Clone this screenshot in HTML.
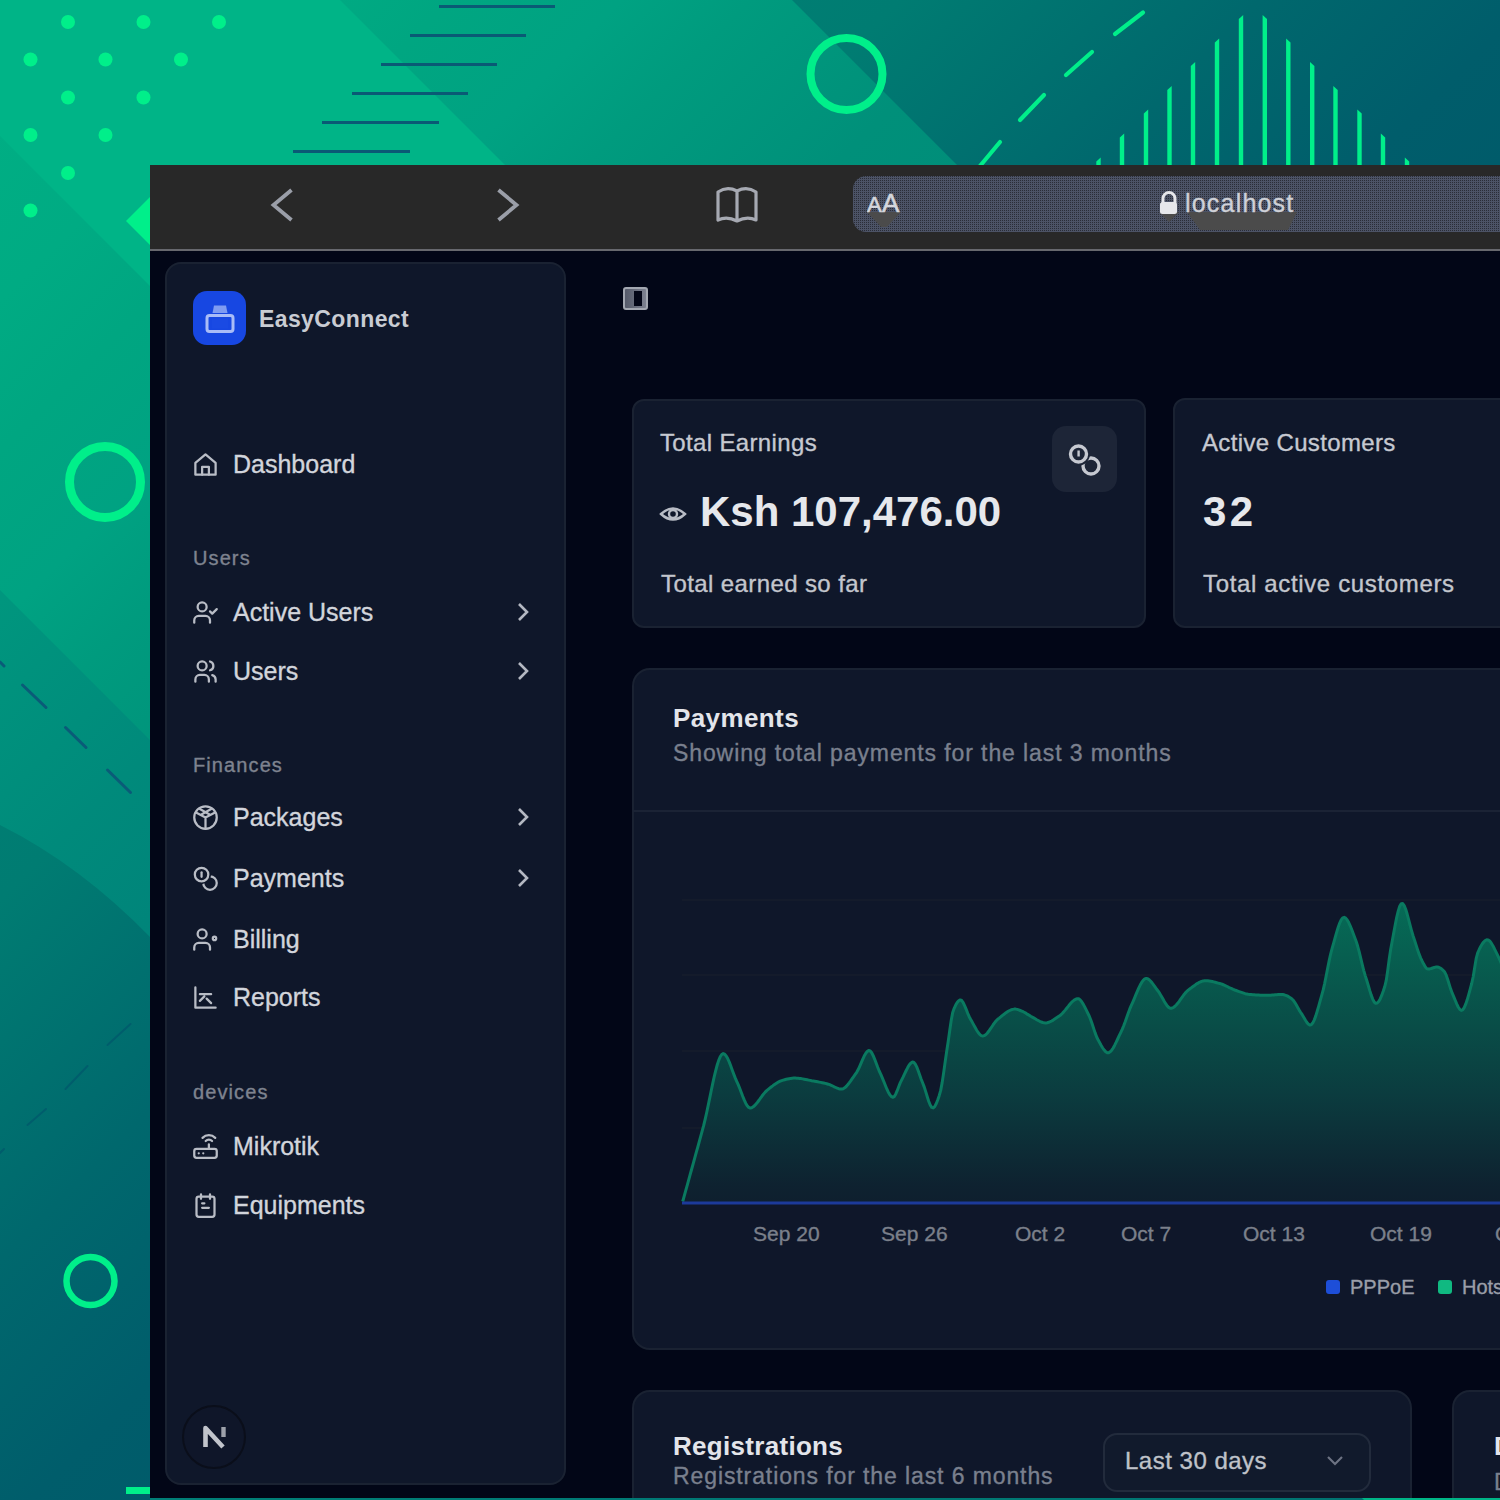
<!DOCTYPE html>
<html><head><meta charset="utf-8">
<style>
*{margin:0;padding:0;box-sizing:border-box}
html,body{width:1500px;height:1500px;overflow:hidden;font-family:"Liberation Sans",sans-serif}
body{position:relative;background:linear-gradient(135deg,#0fbb86 0%,#05a383 25%,#007a76 50%,#005d70 75%,#00526c 100%)}
.abs{position:absolute}
#bg{position:absolute;left:0;top:0;width:1500px;height:1500px}
#pg{position:absolute;left:-150px;top:-165px;width:1500px;height:1500px}
#win{position:absolute;left:150px;top:165px;width:1350px;height:1333px;background:#020617;overflow:hidden}
#tb{position:absolute;left:0;top:0;width:1350px;height:86px;background:#282828;border-bottom:2px solid #67686e}
#url{position:absolute;left:703px;top:11px;width:700px;height:56px;border-radius:13px;background-color:#4c5366;background-image:conic-gradient(#2a2d37 25%,transparent 0);background-size:2px 2px}
.t{position:absolute;white-space:nowrap;line-height:1;-webkit-text-stroke:0.35px currentColor}
.card{position:absolute;background:#0f172a;border:2px solid #1a2232;border-radius:12px}
.nav{color:#d4d7de;font-size:24px}
.sec{color:#8a8f9b;font-size:19px}
.ico{position:absolute}
</style></head><body>
<svg id="bg" width="1500" height="1500" viewBox="0 0 1500 1500">
  <defs>
    <linearGradient id="gBC" gradientUnits="userSpaceOnUse" x1="0" y1="0" x2="1500" y2="1500">
      <stop offset="0" stop-color="#00b084"/>
      <stop offset="0.1" stop-color="#00ab83"/>
      <stop offset="0.15" stop-color="#00a681"/>
      <stop offset="0.207" stop-color="#00a282"/>
      <stop offset="0.25" stop-color="#009b7e"/>
      <stop offset="0.333" stop-color="#00907a"/>
      <stop offset="1" stop-color="#007070"/>
    </linearGradient>
    <linearGradient id="gD" gradientUnits="userSpaceOnUse" x1="0" y1="0" x2="1500" y2="1500">
      <stop offset="0" stop-color="#009a7f"/>
      <stop offset="0.2" stop-color="#00967e"/>
      <stop offset="0.3" stop-color="#008a7b"/>
      <stop offset="0.367" stop-color="#00847a"/>
      <stop offset="1" stop-color="#007070"/>
    </linearGradient>
    <linearGradient id="g2" gradientUnits="userSpaceOnUse" x1="0" y1="0" x2="1500" y2="1500">
      <stop offset="0" stop-color="#008a78"/>
      <stop offset="0.3" stop-color="#007c72"/>
      <stop offset="0.42" stop-color="#00686d"/>
      <stop offset="0.51" stop-color="#005d6b"/>
      <stop offset="1" stop-color="#004a60"/>
    </linearGradient>
  </defs>
  <rect width="1500" height="1500" fill="url(#gBC)"/>
  <polygon points="0,0 340,0 2000,1660 2000,2136 0,136" fill="#00b487"/>
  <polygon points="0,590 1500,2090 0,2090" fill="url(#gD)"/>
  <polygon points="792,0 1500,0 1500,708" fill="url(#g2)"/>
  <path d="M0,825 Q80,865 150,937 L150,1500 L0,1500 Z" fill="url(#g2)"/>
  <!-- dots -->
  <g fill="#00ef8a">
    <circle cx="68" cy="22" r="7"/><circle cx="143.5" cy="22" r="7"/><circle cx="219" cy="22" r="7"/>
    <circle cx="30.5" cy="59.5" r="7"/><circle cx="105.5" cy="59.5" r="7"/><circle cx="181" cy="59.5" r="7"/>
    <circle cx="68" cy="97.5" r="7"/><circle cx="143.5" cy="97.5" r="7"/>
    <circle cx="30.5" cy="135" r="7"/><circle cx="105.5" cy="135" r="7"/>
    <circle cx="68" cy="173" r="7"/>
    <circle cx="30.5" cy="210.5" r="7"/>
  </g>
  <!-- horizontal lines -->
  <g stroke="#0a5a75" stroke-width="3">
    <line x1="439" y1="6.5" x2="555" y2="6.5"/>
    <line x1="410" y1="35.5" x2="526" y2="35.5"/>
    <line x1="381" y1="64.5" x2="497" y2="64.5"/>
    <line x1="352" y1="93.5" x2="468" y2="93.5"/>
    <line x1="322" y1="122.5" x2="439" y2="122.5"/>
    <line x1="293" y1="151.5" x2="410" y2="151.5"/>
  </g>
  <circle cx="846.5" cy="74" r="36" fill="none" stroke="#00ef8a" stroke-width="8"/>
  <circle cx="105" cy="482" r="35.5" fill="none" stroke="#00ef8a" stroke-width="9"/>
  <circle cx="90.5" cy="1281" r="24" fill="none" stroke="#00ef8a" stroke-width="6.5"/>
  <rect x="126" y="1487" width="24" height="7" fill="#00ef8a"/>
  <polygon points="126,221 150,197 174,221 150,245" fill="#00ef8a"/>
  <!-- dashed diagonal -->
  <g stroke="#00ef8a" stroke-width="4.2" stroke-linecap="round">
    <line x1="1115" y1="34" x2="1143" y2="12.5"/>
    <line x1="1066" y1="75" x2="1092" y2="52"/>
    <line x1="1020" y1="120" x2="1044" y2="95"/>
    <line x1="980" y1="166" x2="1000" y2="142"/>
  </g>
  <!-- vertical bars -->
  <g fill="#00ef8a"><polygon points="1096.3,161.5 1100.7,157.5 1100.7,170 1096.3,170"/><polygon points="1119.8,137.5 1124.2,133.5 1124.2,170 1119.8,170"/><polygon points="1143.8,113.5 1148.2,109.5 1148.2,170 1143.8,170"/><polygon points="1167.3,90.0 1171.7,86.0 1171.7,170 1167.3,170"/><polygon points="1190.8,66.0 1195.2,62.0 1195.2,170 1190.8,170"/><polygon points="1214.8,42.5 1219.2,38.5 1219.2,170 1214.8,170"/><polygon points="1238.8,19.0 1243.2,15.0 1243.2,170 1238.8,170"/><polygon points="1262.6,15.0 1267.0,19.0 1267.0,170 1262.6,170"/><polygon points="1286.1,38.5 1290.5,42.5 1290.5,170 1286.1,170"/><polygon points="1310.0,62.0 1314.4,66.0 1314.4,170 1310.0,170"/><polygon points="1333.3,86.0 1337.7,90.0 1337.7,170 1333.3,170"/><polygon points="1357.3,109.5 1361.7,113.5 1361.7,170 1357.3,170"/><polygon points="1380.8,133.5 1385.2,137.5 1385.2,170 1380.8,170"/><polygon points="1404.8,157.5 1409.2,161.5 1409.2,170 1404.8,170"/></g>
  <!-- dashed dark lines left -->
  <g stroke="#0a5b78" stroke-width="3" stroke-linecap="round">
    <line x1="0" y1="662" x2="4" y2="666"/>
    <line x1="22.5" y1="685" x2="46" y2="707.5"/>
    <line x1="65.5" y1="727.5" x2="86" y2="747.5"/>
    <line x1="107.5" y1="770" x2="130.5" y2="792.5"/>
  </g>
  <g stroke="#005d6c" stroke-width="2" stroke-linecap="round"><line x1="0" y1="1153" x2="4" y2="1149"/>
    <line x1="107.5" y1="1045" x2="130.5" y2="1024"/>
    <line x1="65.5" y1="1089" x2="87.5" y2="1066"/>
    <line x1="27.5" y1="1125" x2="46" y2="1109"/>
  </g>
</svg>

<div id="win">
  <div id="pg">
  <div class="card" style="left:165px;top:262px;width:401px;height:1223px;border-radius:16px"></div>
  <div class="abs" style="left:193px;top:291px;width:53px;height:54px;border-radius:14px;background:#1747e2"></div>
  <svg class="ico" style="left:203px;top:301px" width="34" height="34" viewBox="0 0 34 34" fill="none"><path d="M9.5,12 L11,4.5 H23 L24.5,12 Z" fill="#7f9cf2"/><rect x="4" y="14.5" width="26" height="16" rx="2.5" stroke="#a9bcf7" stroke-width="3"/><rect x="9" y="17.5" width="16" height="10" fill="#1a4ae3"/></svg>
  <div class="t" style="left:259px;top:307.5px;font-size:23px;color:#c9ccd3;font-weight:bold;-webkit-text-stroke:0;letter-spacing:0.4px">EasyConnect</div>
<div class="t" style="left:233px;top:451.8px;font-size:25px;color:#d2d5dc;font-weight:normal;letter-spacing:0px">Dashboard</div>
<svg class="ico" style="left:192px;top:451px" width="27" height="27" viewBox="0 0 24 24" fill="none" stroke="#b9bdc6" stroke-width="2" stroke-linecap="round" stroke-linejoin="round"><path d="M3 10.5 L12 3 L21 10.5 V21 H3 Z"/><path d="M9 21 V14 H15 V21"/></svg>
<div class="t" style="left:233px;top:599.8px;font-size:25px;color:#d2d5dc;font-weight:normal;letter-spacing:0px">Active Users</div>
<svg class="ico" style="left:192px;top:599px" width="27" height="27" viewBox="0 0 24 24" fill="none" stroke="#b9bdc6" stroke-width="2" stroke-linecap="round" stroke-linejoin="round"><circle cx="9" cy="7" r="4"/><path d="M2 21 v-2 a4 4 0 0 1 4-4 h6 a4 4 0 0 1 4 4 v2"/><polyline points="16 11 18 13 22 9"/></svg>
<svg class="ico" style="left:516px;top:602px" width="16" height="20" viewBox="0 0 16 20"><polyline points="3,2 11,10 3,18" fill="none" stroke="#b4b8c2" stroke-width="2.6"/></svg>
<div class="t" style="left:233px;top:658.8px;font-size:25px;color:#d2d5dc;font-weight:normal;letter-spacing:0px">Users</div>
<svg class="ico" style="left:192px;top:658px" width="27" height="27" viewBox="0 0 24 24" fill="none" stroke="#b9bdc6" stroke-width="2" stroke-linecap="round" stroke-linejoin="round"><circle cx="9" cy="7" r="4"/><path d="M3 21 v-2 a4 4 0 0 1 4-4 h4 a4 4 0 0 1 4 4 v2"/><path d="M16 3.13 a4 4 0 0 1 0 7.75"/><path d="M21 21 v-2 a4 4 0 0 0-3-3.85"/></svg>
<svg class="ico" style="left:516px;top:661px" width="16" height="20" viewBox="0 0 16 20"><polyline points="3,2 11,10 3,18" fill="none" stroke="#b4b8c2" stroke-width="2.6"/></svg>
<div class="t" style="left:233px;top:804.8px;font-size:25px;color:#d2d5dc;font-weight:normal;letter-spacing:0px">Packages</div>
<svg class="ico" style="left:192px;top:804px" width="27" height="27" viewBox="0 0 24 24" fill="none" stroke="#b9bdc6" stroke-width="2" stroke-linecap="round" stroke-linejoin="round"><circle cx="12" cy="12" r="10"/><path d="M12 12 v10 M12 12 L3.5 7.5 M12 12 L20.5 7.5 M7 4.5 L16 9.5 M17 4.5 L8 9.5"/></svg>
<svg class="ico" style="left:516px;top:807px" width="16" height="20" viewBox="0 0 16 20"><polyline points="3,2 11,10 3,18" fill="none" stroke="#b4b8c2" stroke-width="2.6"/></svg>
<div class="t" style="left:233px;top:865.8px;font-size:25px;color:#d2d5dc;font-weight:normal;letter-spacing:0px">Payments</div>
<svg class="ico" style="left:192px;top:865px" width="27" height="27" viewBox="0 0 24 24" fill="none" stroke="#b9bdc6" stroke-width="2" stroke-linecap="round" stroke-linejoin="round"><circle cx="16" cy="16" r="6"/><circle cx="8.5" cy="8.5" r="8.5" fill="#0f172a" stroke="none"/><circle cx="8.5" cy="8.5" r="6"/><path d="M8.5 6.5v4"/></svg>
<svg class="ico" style="left:516px;top:868px" width="16" height="20" viewBox="0 0 16 20"><polyline points="3,2 11,10 3,18" fill="none" stroke="#b4b8c2" stroke-width="2.6"/></svg>
<div class="t" style="left:233px;top:926.8px;font-size:25px;color:#d2d5dc;font-weight:normal;letter-spacing:0px">Billing</div>
<svg class="ico" style="left:192px;top:926px" width="27" height="27" viewBox="0 0 24 24" fill="none" stroke="#b9bdc6" stroke-width="2" stroke-linecap="round" stroke-linejoin="round"><circle cx="9" cy="7" r="4"/><path d="M2 21 v-2 a4 4 0 0 1 4-4 h6 a4 4 0 0 1 4 4 v2"/><circle cx="20" cy="11" r="1.5"/></svg>
<div class="t" style="left:233px;top:984.8px;font-size:25px;color:#d2d5dc;font-weight:normal;letter-spacing:0px">Reports</div>
<svg class="ico" style="left:192px;top:984px" width="27" height="27" viewBox="0 0 24 24" fill="none" stroke="#b9bdc6" stroke-width="2" stroke-linecap="round" stroke-linejoin="round"><path d="M3 3 v18 h18"/><path d="M7 15 l4-4 M7 9 h10 M13 13 l4 4"/></svg>
<div class="t" style="left:233px;top:1133.8px;font-size:25px;color:#d2d5dc;font-weight:normal;letter-spacing:0px">Mikrotik</div>
<svg class="ico" style="left:192px;top:1133px" width="27" height="27" viewBox="0 0 24 24" fill="none" stroke="#b9bdc6" stroke-width="2" stroke-linecap="round" stroke-linejoin="round"><rect x="2" y="14" width="20" height="8" rx="2"/><path d="M6 18h.01 M10 18h.01 M15 10v4 M17.84 7.17a4 4 0 0 0-5.66 0 M20.66 4.34a8 8 0 0 0-11.31 0"/></svg>
<div class="t" style="left:233px;top:1192.8px;font-size:25px;color:#d2d5dc;font-weight:normal;letter-spacing:0px">Equipments</div>
<svg class="ico" style="left:192px;top:1192px" width="27" height="27" viewBox="0 0 24 24" fill="none" stroke="#b9bdc6" stroke-width="2" stroke-linecap="round" stroke-linejoin="round"><rect x="4" y="4" width="16" height="18" rx="2"/><path d="M8 2v4 M16 2v4 M9 14h6 M9 10h2"/></svg>
<div class="t" style="left:193px;top:548.1px;font-size:20px;color:#7e838f;font-weight:normal;letter-spacing:1.1px">Users</div>
<div class="t" style="left:193px;top:755.1px;font-size:20px;color:#7e838f;font-weight:normal;letter-spacing:1.1px">Finances</div>
<div class="t" style="left:193px;top:1082.1px;font-size:20px;color:#7e838f;font-weight:normal;letter-spacing:1.1px">devices</div>
  <div class="abs" style="left:182px;top:1405px;width:64px;height:64px;border-radius:50%;border:2px solid #0a0e1a;background:#0f1629"></div>
  <svg class="ico" style="left:202px;top:1425px" width="26" height="25" viewBox="0 0 26 25"><path d="M3.5,22 V3 L21,22" fill="none" stroke="#c1c4cb" stroke-width="4.6" stroke-linejoin="round"/><path d="M21.5,2 V12" stroke="#9da1aa" stroke-width="4.4"/></svg>
  <!-- sidebar toggle -->
  <div class="abs" style="left:623px;top:287px;width:25px;height:23px;border:2px solid #a3a7b1;border-top-width:2.5px;border-bottom-width:2.5px;border-radius:3px;background:linear-gradient(90deg,#555a6a,#7d8190)"></div>
  <div class="abs" style="left:634px;top:291px;width:8px;height:15px;background:#030617"></div>

  <!-- total earnings card -->
  <div class="card" style="left:632px;top:399px;width:514px;height:229px"></div>
  <div class="t" style="left:660px;top:430.7px;font-size:24px;color:#c6c9d1;font-weight:normal;letter-spacing:0.35px">Total Earnings</div>
  <div class="abs" style="left:1052px;top:426px;width:65px;height:66px;border-radius:14px;background:#1d2537"></div>
  <svg class="ico" style="left:1064px;top:440px" width="42" height="42" viewBox="0 0 42 42" fill="none"><circle cx="27" cy="26" r="8" stroke="#c6c9d1" stroke-width="3.4"/><circle cx="14.5" cy="14" r="11.5" fill="#1d2537"/><circle cx="14.5" cy="14" r="8" stroke="#c6c9d1" stroke-width="3.4"/><rect x="13.4" y="10.5" width="2.4" height="6" fill="#c6c9d1"/></svg>
  <svg class="ico" style="left:659px;top:503px" width="28" height="22" viewBox="0 0 28 22" fill="none" stroke="#b8bcc5" stroke-width="2.4"><path d="M2 11 Q14 0 26 11 Q14 22 2 11 Z"/><circle cx="14" cy="11" r="4"/></svg>
  <div class="t" style="left:700px;top:491.4px;font-size:42px;color:#e6e8ec;font-weight:bold;-webkit-text-stroke:0;letter-spacing:0px">Ksh 107,476.00</div>
  <div class="t" style="left:661px;top:571.7px;font-size:24px;color:#c3c6cd;font-weight:normal;letter-spacing:0.4px">Total earned so far</div>

  <!-- active customers card -->
  <div class="card" style="left:1173px;top:398px;width:400px;height:230px"></div>
  <div class="t" style="left:1202px;top:430.7px;font-size:24px;color:#c6c9d1;font-weight:normal;letter-spacing:0.35px">Active Customers</div>
  <div class="t" style="left:1203px;top:491.4px;font-size:42px;color:#e6e8ec;font-weight:bold;-webkit-text-stroke:0;letter-spacing:3.5px">32</div>
  <div class="t" style="left:1203px;top:571.7px;font-size:24px;color:#c3c6cd;font-weight:normal;letter-spacing:0.65px">Total active customers</div>

  <!-- payments card -->
  <div class="card" style="left:632px;top:668px;width:950px;height:682px;border-radius:18px"></div>
  <div class="t" style="left:673px;top:705.0px;font-size:26px;color:#e3e5ea;font-weight:bold;-webkit-text-stroke:0;letter-spacing:0.4px">Payments</div>
  <div class="t" style="left:673px;top:741.5px;font-size:23px;color:#7a808e;font-weight:normal;letter-spacing:0.9px">Showing total payments for the last 3 months</div>
  <div class="abs" style="left:633px;top:810px;width:900px;height:2px;background:#1b2335"></div>
  <svg class="abs" style="left:0;top:0" width="1500" height="1500" viewBox="0 0 1500 1500">
    <defs><linearGradient id="cf" gradientUnits="userSpaceOnUse" x1="0" y1="900" x2="0" y2="1203">
      <stop offset="0" stop-color="#066c57"/>
      <stop offset="0.18" stop-color="#075f50"/>
      <stop offset="0.64" stop-color="#0b3c3f"/>
      <stop offset="0.94" stop-color="#0e2230"/>
      <stop offset="1" stop-color="#0e1f2e"/>
    </linearGradient></defs>
    <g stroke="#141b2b" stroke-width="2">
      <line x1="682" y1="900" x2="1500" y2="900"/>
      <line x1="682" y1="975" x2="1500" y2="975"/>
      <line x1="682" y1="1051" x2="1500" y2="1051"/>
      <line x1="682" y1="1128" x2="1500" y2="1128"/>
    </g>
    <path d="M682.7,1201.5 L684.2,1196.1 L685.7,1190.7 L687.2,1185.3 L688.7,1179.9 L690.2,1174.4 L691.7,1169.0 L693.2,1163.6 L694.7,1158.2 L696.2,1152.7 L697.7,1147.3 L699.2,1141.8 L700.7,1136.4 L702.2,1130.9 L703.7,1125.4 L705.2,1119.2 L706.7,1112.5 L708.2,1105.4 L709.7,1098.1 L711.2,1090.8 L712.7,1083.6 L714.2,1076.8 L715.7,1070.6 L717.2,1065.0 L718.7,1060.4 L720.2,1056.8 L721.7,1054.5 L723.2,1053.6 L724.7,1054.2 L726.2,1055.9 L727.7,1058.6 L729.2,1061.9 L730.7,1065.8 L732.2,1069.9 L733.7,1074.0 L735.2,1077.9 L736.7,1081.4 L738.2,1084.6 L739.7,1088.3 L741.2,1092.2 L742.7,1096.2 L744.2,1099.9 L745.7,1103.2 L747.2,1105.8 L748.7,1107.4 L750.2,1108.0 L751.7,1107.7 L753.2,1106.8 L754.7,1105.5 L756.2,1103.9 L757.7,1102.0 L759.2,1100.0 L760.7,1097.9 L762.2,1095.8 L763.7,1093.9 L765.2,1092.1 L766.7,1090.6 L768.2,1089.4 L769.7,1088.2 L771.2,1087.0 L772.7,1085.9 L774.2,1084.7 L775.7,1083.7 L777.2,1082.7 L778.7,1081.9 L780.2,1081.2 L781.7,1080.6 L783.2,1080.1 L784.7,1079.7 L786.2,1079.3 L787.7,1079.0 L789.2,1078.7 L790.7,1078.4 L792.2,1078.2 L793.7,1078.1 L795.2,1078.1 L796.7,1078.2 L798.2,1078.3 L799.7,1078.4 L801.2,1078.6 L802.7,1078.9 L804.2,1079.2 L805.7,1079.5 L807.2,1079.8 L808.7,1080.1 L810.2,1080.4 L811.7,1080.7 L813.2,1080.9 L814.7,1081.2 L816.2,1081.5 L817.7,1081.8 L819.2,1082.1 L820.7,1082.4 L822.2,1082.7 L823.7,1083.0 L825.2,1083.4 L826.7,1083.8 L828.2,1084.2 L829.7,1084.7 L831.2,1085.3 L832.7,1086.0 L834.2,1086.8 L835.7,1087.5 L837.2,1088.2 L838.7,1088.7 L840.2,1089.0 L841.7,1089.1 L843.2,1088.7 L844.7,1087.8 L846.2,1086.5 L847.7,1084.8 L849.2,1082.9 L850.7,1080.9 L852.2,1078.7 L853.7,1076.6 L855.2,1074.4 L856.7,1072.3 L858.2,1069.6 L859.7,1066.3 L861.2,1062.8 L862.7,1059.4 L864.2,1056.1 L865.7,1053.4 L867.2,1051.5 L868.7,1050.5 L870.2,1050.9 L871.7,1052.8 L873.2,1055.7 L874.7,1059.3 L876.2,1063.3 L877.7,1067.3 L879.2,1071.0 L880.7,1074.1 L882.2,1077.6 L883.7,1081.3 L885.2,1085.0 L886.7,1088.7 L888.2,1091.9 L889.7,1094.6 L891.2,1096.4 L892.7,1097.3 L894.2,1096.6 L895.7,1094.2 L897.2,1090.7 L898.7,1086.7 L900.2,1082.9 L901.7,1079.9 L903.2,1076.9 L904.7,1073.7 L906.2,1070.5 L907.7,1067.6 L909.2,1065.0 L910.7,1063.2 L912.2,1062.1 L913.7,1062.3 L915.2,1064.0 L916.7,1066.9 L918.2,1070.7 L919.7,1074.9 L921.2,1079.2 L922.7,1083.0 L924.2,1086.9 L925.7,1091.6 L927.2,1096.5 L928.7,1101.2 L930.2,1105.0 L931.7,1107.4 L933.2,1107.9 L934.7,1106.6 L936.2,1103.8 L937.7,1100.0 L939.2,1095.7 L940.7,1090.4 L942.2,1082.4 L943.7,1072.4 L945.2,1061.6 L946.7,1051.2 L948.2,1041.5 L949.7,1030.8 L951.2,1020.5 L952.7,1012.5 L954.2,1008.3 L955.7,1005.1 L957.2,1002.5 L958.7,1000.7 L960.2,999.9 L961.7,1000.5 L963.2,1002.6 L964.7,1005.8 L966.2,1009.4 L967.7,1013.3 L969.2,1016.7 L970.7,1019.5 L972.2,1022.1 L973.7,1024.9 L975.2,1027.6 L976.7,1030.2 L978.2,1032.5 L979.7,1034.4 L981.2,1035.6 L982.7,1036.0 L984.2,1035.6 L985.7,1034.7 L987.2,1033.2 L988.7,1031.3 L990.2,1029.2 L991.7,1027.0 L993.2,1024.7 L994.7,1022.6 L996.2,1020.7 L997.7,1019.2 L999.2,1018.1 L1000.7,1016.9 L1002.2,1015.6 L1003.7,1014.5 L1005.2,1013.3 L1006.7,1012.3 L1008.2,1011.3 L1009.7,1010.5 L1011.2,1009.8 L1012.7,1009.4 L1014.2,1009.1 L1015.7,1009.1 L1017.2,1009.4 L1018.7,1009.9 L1020.2,1010.5 L1021.7,1011.1 L1023.2,1011.7 L1024.7,1012.5 L1026.2,1013.4 L1027.7,1014.4 L1029.2,1015.3 L1030.7,1016.3 L1032.2,1017.1 L1033.7,1017.9 L1035.2,1018.8 L1036.7,1019.7 L1038.2,1020.5 L1039.7,1021.3 L1041.2,1022.0 L1042.7,1022.5 L1044.2,1022.8 L1045.7,1022.9 L1047.2,1022.7 L1048.7,1022.3 L1050.2,1021.7 L1051.7,1021.0 L1053.2,1020.1 L1054.7,1019.1 L1056.2,1018.1 L1057.7,1017.1 L1059.2,1016.1 L1060.7,1015.0 L1062.2,1013.5 L1063.7,1011.9 L1065.2,1010.1 L1066.7,1008.2 L1068.2,1006.4 L1069.7,1004.5 L1071.2,1002.8 L1072.7,1001.3 L1074.2,1000.1 L1075.7,999.2 L1077.2,998.8 L1078.7,998.8 L1080.2,999.9 L1081.7,1001.7 L1083.2,1004.1 L1084.7,1006.9 L1086.2,1009.9 L1087.7,1013.0 L1089.2,1016.0 L1090.7,1019.7 L1092.2,1024.1 L1093.7,1028.6 L1095.2,1033.1 L1096.7,1037.0 L1098.2,1040.1 L1099.7,1042.8 L1101.2,1045.5 L1102.7,1048.0 L1104.2,1050.1 L1105.7,1051.8 L1107.2,1052.7 L1108.7,1052.7 L1110.2,1051.8 L1111.7,1050.2 L1113.2,1048.0 L1114.7,1045.2 L1116.2,1042.2 L1117.7,1039.0 L1119.2,1035.7 L1120.7,1032.6 L1122.2,1029.4 L1123.7,1025.7 L1125.2,1021.7 L1126.7,1017.4 L1128.2,1013.2 L1129.7,1009.2 L1131.2,1005.6 L1132.7,1002.3 L1134.2,998.8 L1135.7,995.2 L1137.2,991.6 L1138.7,988.2 L1140.2,985.1 L1141.7,982.4 L1143.2,980.3 L1144.7,978.9 L1146.2,978.4 L1147.7,978.7 L1149.2,979.7 L1150.7,981.2 L1152.2,983.0 L1153.7,985.1 L1155.2,987.2 L1156.7,989.3 L1158.2,991.2 L1159.7,993.4 L1161.2,995.9 L1162.7,998.6 L1164.2,1001.3 L1165.7,1003.7 L1167.2,1005.9 L1168.7,1007.4 L1170.2,1008.2 L1171.7,1008.2 L1173.2,1007.6 L1174.7,1006.5 L1176.2,1005.0 L1177.7,1003.3 L1179.2,1001.3 L1180.7,999.2 L1182.2,997.1 L1183.7,995.0 L1185.2,993.1 L1186.7,991.5 L1188.2,990.1 L1189.7,989.0 L1191.2,987.9 L1192.7,986.8 L1194.2,985.7 L1195.7,984.6 L1197.2,983.6 L1198.7,982.7 L1200.2,982.0 L1201.7,981.4 L1203.2,980.9 L1204.7,980.7 L1206.2,980.7 L1207.7,980.8 L1209.2,981.0 L1210.7,981.2 L1212.2,981.5 L1213.7,981.9 L1215.2,982.3 L1216.7,982.7 L1218.2,983.1 L1219.7,983.5 L1221.2,983.9 L1222.7,984.5 L1224.2,985.1 L1225.7,985.8 L1227.2,986.5 L1228.7,987.3 L1230.2,988.0 L1231.7,988.7 L1233.2,989.4 L1234.7,990.0 L1236.2,990.5 L1237.7,991.1 L1239.2,991.7 L1240.7,992.2 L1242.2,992.7 L1243.7,993.2 L1245.2,993.7 L1246.7,994.0 L1248.2,994.3 L1249.7,994.5 L1251.2,994.6 L1252.7,994.7 L1254.2,994.8 L1255.7,994.9 L1257.2,995.0 L1258.7,995.1 L1260.2,995.2 L1261.7,995.2 L1263.2,995.3 L1264.7,995.3 L1266.2,995.3 L1267.7,995.3 L1269.2,995.2 L1270.7,995.2 L1272.2,995.1 L1273.7,995.0 L1275.2,994.8 L1276.7,994.7 L1278.2,994.6 L1279.7,994.5 L1281.2,994.5 L1282.7,994.5 L1284.2,994.8 L1285.7,995.3 L1287.2,995.9 L1288.7,996.8 L1290.2,997.7 L1291.7,998.7 L1293.2,1000.2 L1294.7,1002.3 L1296.2,1004.8 L1297.7,1007.5 L1299.2,1010.1 L1300.7,1012.5 L1302.2,1014.7 L1303.7,1017.2 L1305.2,1019.8 L1306.7,1022.2 L1308.2,1024.0 L1309.7,1025.0 L1311.2,1024.8 L1312.7,1023.1 L1314.2,1020.1 L1315.7,1016.1 L1317.2,1011.3 L1318.7,1006.1 L1320.2,1000.7 L1321.7,995.3 L1323.2,989.9 L1324.7,983.3 L1326.2,975.8 L1327.7,968.1 L1329.2,960.6 L1330.7,953.8 L1332.2,948.1 L1333.7,942.8 L1335.2,937.4 L1336.7,932.1 L1338.2,927.2 L1339.7,923.1 L1341.2,919.8 L1342.7,917.8 L1344.2,917.3 L1345.7,918.1 L1347.2,919.9 L1348.7,922.6 L1350.2,925.8 L1351.7,929.5 L1353.2,933.5 L1354.7,937.5 L1356.2,941.5 L1357.7,946.3 L1359.2,951.9 L1360.7,958.1 L1362.2,964.3 L1363.7,970.3 L1365.2,975.6 L1366.7,980.3 L1368.2,985.3 L1369.7,990.4 L1371.2,995.1 L1372.7,999.1 L1374.2,1002.0 L1375.7,1003.3 L1377.2,1003.0 L1378.7,1001.5 L1380.2,998.9 L1381.7,995.4 L1383.2,991.3 L1384.7,986.8 L1386.2,980.7 L1387.7,970.6 L1389.2,959.2 L1390.7,949.3 L1392.2,941.3 L1393.7,933.1 L1395.2,924.9 L1396.7,917.4 L1398.2,911.1 L1399.7,906.3 L1401.2,903.7 L1402.7,903.6 L1404.2,905.6 L1405.7,909.3 L1407.2,914.3 L1408.7,919.9 L1410.2,925.7 L1411.7,931.3 L1413.2,936.2 L1414.7,940.7 L1416.2,945.4 L1417.7,950.1 L1419.2,954.4 L1420.7,958.1 L1422.2,961.2 L1423.7,964.1 L1425.2,966.8 L1426.7,968.6 L1428.2,969.1 L1429.7,968.9 L1431.2,968.5 L1432.7,968.0 L1434.2,967.5 L1435.7,967.1 L1437.2,967.0 L1438.7,967.3 L1440.2,968.1 L1441.7,969.1 L1443.2,970.4 L1444.7,972.1 L1446.2,975.2 L1447.7,979.5 L1449.2,984.4 L1450.7,989.1 L1452.2,993.2 L1453.7,996.6 L1455.2,1000.3 L1456.7,1003.9 L1458.2,1007.0 L1459.7,1009.3 L1461.2,1010.4 L1462.7,1009.8 L1464.2,1007.7 L1465.7,1004.2 L1467.2,999.8 L1468.7,994.6 L1470.2,989.1 L1471.7,983.5 L1473.2,976.7 L1474.7,967.4 L1476.2,958.4 L1477.7,952.8 L1479.2,949.5 L1480.7,946.5 L1482.2,944.0 L1483.7,942.0 L1485.2,940.5 L1486.7,939.8 L1488.2,939.9 L1489.7,941.0 L1491.2,942.9 L1492.7,945.4 L1494.2,948.3 L1495.7,951.4 L1497.2,954.4 L1498.7,957.5 L1500.2,960.8 L1501.7,964.5 L1503.2,968.6 L1504.7,972.8 L1506.2,977.4 L1507.7,982.2 L1509.2,987.2 L1510,1203 L682.7,1203 Z" fill="url(#cf)"/>
    <path d="M682.7,1201.5 L684.2,1196.1 L685.7,1190.7 L687.2,1185.3 L688.7,1179.9 L690.2,1174.4 L691.7,1169.0 L693.2,1163.6 L694.7,1158.2 L696.2,1152.7 L697.7,1147.3 L699.2,1141.8 L700.7,1136.4 L702.2,1130.9 L703.7,1125.4 L705.2,1119.2 L706.7,1112.5 L708.2,1105.4 L709.7,1098.1 L711.2,1090.8 L712.7,1083.6 L714.2,1076.8 L715.7,1070.6 L717.2,1065.0 L718.7,1060.4 L720.2,1056.8 L721.7,1054.5 L723.2,1053.6 L724.7,1054.2 L726.2,1055.9 L727.7,1058.6 L729.2,1061.9 L730.7,1065.8 L732.2,1069.9 L733.7,1074.0 L735.2,1077.9 L736.7,1081.4 L738.2,1084.6 L739.7,1088.3 L741.2,1092.2 L742.7,1096.2 L744.2,1099.9 L745.7,1103.2 L747.2,1105.8 L748.7,1107.4 L750.2,1108.0 L751.7,1107.7 L753.2,1106.8 L754.7,1105.5 L756.2,1103.9 L757.7,1102.0 L759.2,1100.0 L760.7,1097.9 L762.2,1095.8 L763.7,1093.9 L765.2,1092.1 L766.7,1090.6 L768.2,1089.4 L769.7,1088.2 L771.2,1087.0 L772.7,1085.9 L774.2,1084.7 L775.7,1083.7 L777.2,1082.7 L778.7,1081.9 L780.2,1081.2 L781.7,1080.6 L783.2,1080.1 L784.7,1079.7 L786.2,1079.3 L787.7,1079.0 L789.2,1078.7 L790.7,1078.4 L792.2,1078.2 L793.7,1078.1 L795.2,1078.1 L796.7,1078.2 L798.2,1078.3 L799.7,1078.4 L801.2,1078.6 L802.7,1078.9 L804.2,1079.2 L805.7,1079.5 L807.2,1079.8 L808.7,1080.1 L810.2,1080.4 L811.7,1080.7 L813.2,1080.9 L814.7,1081.2 L816.2,1081.5 L817.7,1081.8 L819.2,1082.1 L820.7,1082.4 L822.2,1082.7 L823.7,1083.0 L825.2,1083.4 L826.7,1083.8 L828.2,1084.2 L829.7,1084.7 L831.2,1085.3 L832.7,1086.0 L834.2,1086.8 L835.7,1087.5 L837.2,1088.2 L838.7,1088.7 L840.2,1089.0 L841.7,1089.1 L843.2,1088.7 L844.7,1087.8 L846.2,1086.5 L847.7,1084.8 L849.2,1082.9 L850.7,1080.9 L852.2,1078.7 L853.7,1076.6 L855.2,1074.4 L856.7,1072.3 L858.2,1069.6 L859.7,1066.3 L861.2,1062.8 L862.7,1059.4 L864.2,1056.1 L865.7,1053.4 L867.2,1051.5 L868.7,1050.5 L870.2,1050.9 L871.7,1052.8 L873.2,1055.7 L874.7,1059.3 L876.2,1063.3 L877.7,1067.3 L879.2,1071.0 L880.7,1074.1 L882.2,1077.6 L883.7,1081.3 L885.2,1085.0 L886.7,1088.7 L888.2,1091.9 L889.7,1094.6 L891.2,1096.4 L892.7,1097.3 L894.2,1096.6 L895.7,1094.2 L897.2,1090.7 L898.7,1086.7 L900.2,1082.9 L901.7,1079.9 L903.2,1076.9 L904.7,1073.7 L906.2,1070.5 L907.7,1067.6 L909.2,1065.0 L910.7,1063.2 L912.2,1062.1 L913.7,1062.3 L915.2,1064.0 L916.7,1066.9 L918.2,1070.7 L919.7,1074.9 L921.2,1079.2 L922.7,1083.0 L924.2,1086.9 L925.7,1091.6 L927.2,1096.5 L928.7,1101.2 L930.2,1105.0 L931.7,1107.4 L933.2,1107.9 L934.7,1106.6 L936.2,1103.8 L937.7,1100.0 L939.2,1095.7 L940.7,1090.4 L942.2,1082.4 L943.7,1072.4 L945.2,1061.6 L946.7,1051.2 L948.2,1041.5 L949.7,1030.8 L951.2,1020.5 L952.7,1012.5 L954.2,1008.3 L955.7,1005.1 L957.2,1002.5 L958.7,1000.7 L960.2,999.9 L961.7,1000.5 L963.2,1002.6 L964.7,1005.8 L966.2,1009.4 L967.7,1013.3 L969.2,1016.7 L970.7,1019.5 L972.2,1022.1 L973.7,1024.9 L975.2,1027.6 L976.7,1030.2 L978.2,1032.5 L979.7,1034.4 L981.2,1035.6 L982.7,1036.0 L984.2,1035.6 L985.7,1034.7 L987.2,1033.2 L988.7,1031.3 L990.2,1029.2 L991.7,1027.0 L993.2,1024.7 L994.7,1022.6 L996.2,1020.7 L997.7,1019.2 L999.2,1018.1 L1000.7,1016.9 L1002.2,1015.6 L1003.7,1014.5 L1005.2,1013.3 L1006.7,1012.3 L1008.2,1011.3 L1009.7,1010.5 L1011.2,1009.8 L1012.7,1009.4 L1014.2,1009.1 L1015.7,1009.1 L1017.2,1009.4 L1018.7,1009.9 L1020.2,1010.5 L1021.7,1011.1 L1023.2,1011.7 L1024.7,1012.5 L1026.2,1013.4 L1027.7,1014.4 L1029.2,1015.3 L1030.7,1016.3 L1032.2,1017.1 L1033.7,1017.9 L1035.2,1018.8 L1036.7,1019.7 L1038.2,1020.5 L1039.7,1021.3 L1041.2,1022.0 L1042.7,1022.5 L1044.2,1022.8 L1045.7,1022.9 L1047.2,1022.7 L1048.7,1022.3 L1050.2,1021.7 L1051.7,1021.0 L1053.2,1020.1 L1054.7,1019.1 L1056.2,1018.1 L1057.7,1017.1 L1059.2,1016.1 L1060.7,1015.0 L1062.2,1013.5 L1063.7,1011.9 L1065.2,1010.1 L1066.7,1008.2 L1068.2,1006.4 L1069.7,1004.5 L1071.2,1002.8 L1072.7,1001.3 L1074.2,1000.1 L1075.7,999.2 L1077.2,998.8 L1078.7,998.8 L1080.2,999.9 L1081.7,1001.7 L1083.2,1004.1 L1084.7,1006.9 L1086.2,1009.9 L1087.7,1013.0 L1089.2,1016.0 L1090.7,1019.7 L1092.2,1024.1 L1093.7,1028.6 L1095.2,1033.1 L1096.7,1037.0 L1098.2,1040.1 L1099.7,1042.8 L1101.2,1045.5 L1102.7,1048.0 L1104.2,1050.1 L1105.7,1051.8 L1107.2,1052.7 L1108.7,1052.7 L1110.2,1051.8 L1111.7,1050.2 L1113.2,1048.0 L1114.7,1045.2 L1116.2,1042.2 L1117.7,1039.0 L1119.2,1035.7 L1120.7,1032.6 L1122.2,1029.4 L1123.7,1025.7 L1125.2,1021.7 L1126.7,1017.4 L1128.2,1013.2 L1129.7,1009.2 L1131.2,1005.6 L1132.7,1002.3 L1134.2,998.8 L1135.7,995.2 L1137.2,991.6 L1138.7,988.2 L1140.2,985.1 L1141.7,982.4 L1143.2,980.3 L1144.7,978.9 L1146.2,978.4 L1147.7,978.7 L1149.2,979.7 L1150.7,981.2 L1152.2,983.0 L1153.7,985.1 L1155.2,987.2 L1156.7,989.3 L1158.2,991.2 L1159.7,993.4 L1161.2,995.9 L1162.7,998.6 L1164.2,1001.3 L1165.7,1003.7 L1167.2,1005.9 L1168.7,1007.4 L1170.2,1008.2 L1171.7,1008.2 L1173.2,1007.6 L1174.7,1006.5 L1176.2,1005.0 L1177.7,1003.3 L1179.2,1001.3 L1180.7,999.2 L1182.2,997.1 L1183.7,995.0 L1185.2,993.1 L1186.7,991.5 L1188.2,990.1 L1189.7,989.0 L1191.2,987.9 L1192.7,986.8 L1194.2,985.7 L1195.7,984.6 L1197.2,983.6 L1198.7,982.7 L1200.2,982.0 L1201.7,981.4 L1203.2,980.9 L1204.7,980.7 L1206.2,980.7 L1207.7,980.8 L1209.2,981.0 L1210.7,981.2 L1212.2,981.5 L1213.7,981.9 L1215.2,982.3 L1216.7,982.7 L1218.2,983.1 L1219.7,983.5 L1221.2,983.9 L1222.7,984.5 L1224.2,985.1 L1225.7,985.8 L1227.2,986.5 L1228.7,987.3 L1230.2,988.0 L1231.7,988.7 L1233.2,989.4 L1234.7,990.0 L1236.2,990.5 L1237.7,991.1 L1239.2,991.7 L1240.7,992.2 L1242.2,992.7 L1243.7,993.2 L1245.2,993.7 L1246.7,994.0 L1248.2,994.3 L1249.7,994.5 L1251.2,994.6 L1252.7,994.7 L1254.2,994.8 L1255.7,994.9 L1257.2,995.0 L1258.7,995.1 L1260.2,995.2 L1261.7,995.2 L1263.2,995.3 L1264.7,995.3 L1266.2,995.3 L1267.7,995.3 L1269.2,995.2 L1270.7,995.2 L1272.2,995.1 L1273.7,995.0 L1275.2,994.8 L1276.7,994.7 L1278.2,994.6 L1279.7,994.5 L1281.2,994.5 L1282.7,994.5 L1284.2,994.8 L1285.7,995.3 L1287.2,995.9 L1288.7,996.8 L1290.2,997.7 L1291.7,998.7 L1293.2,1000.2 L1294.7,1002.3 L1296.2,1004.8 L1297.7,1007.5 L1299.2,1010.1 L1300.7,1012.5 L1302.2,1014.7 L1303.7,1017.2 L1305.2,1019.8 L1306.7,1022.2 L1308.2,1024.0 L1309.7,1025.0 L1311.2,1024.8 L1312.7,1023.1 L1314.2,1020.1 L1315.7,1016.1 L1317.2,1011.3 L1318.7,1006.1 L1320.2,1000.7 L1321.7,995.3 L1323.2,989.9 L1324.7,983.3 L1326.2,975.8 L1327.7,968.1 L1329.2,960.6 L1330.7,953.8 L1332.2,948.1 L1333.7,942.8 L1335.2,937.4 L1336.7,932.1 L1338.2,927.2 L1339.7,923.1 L1341.2,919.8 L1342.7,917.8 L1344.2,917.3 L1345.7,918.1 L1347.2,919.9 L1348.7,922.6 L1350.2,925.8 L1351.7,929.5 L1353.2,933.5 L1354.7,937.5 L1356.2,941.5 L1357.7,946.3 L1359.2,951.9 L1360.7,958.1 L1362.2,964.3 L1363.7,970.3 L1365.2,975.6 L1366.7,980.3 L1368.2,985.3 L1369.7,990.4 L1371.2,995.1 L1372.7,999.1 L1374.2,1002.0 L1375.7,1003.3 L1377.2,1003.0 L1378.7,1001.5 L1380.2,998.9 L1381.7,995.4 L1383.2,991.3 L1384.7,986.8 L1386.2,980.7 L1387.7,970.6 L1389.2,959.2 L1390.7,949.3 L1392.2,941.3 L1393.7,933.1 L1395.2,924.9 L1396.7,917.4 L1398.2,911.1 L1399.7,906.3 L1401.2,903.7 L1402.7,903.6 L1404.2,905.6 L1405.7,909.3 L1407.2,914.3 L1408.7,919.9 L1410.2,925.7 L1411.7,931.3 L1413.2,936.2 L1414.7,940.7 L1416.2,945.4 L1417.7,950.1 L1419.2,954.4 L1420.7,958.1 L1422.2,961.2 L1423.7,964.1 L1425.2,966.8 L1426.7,968.6 L1428.2,969.1 L1429.7,968.9 L1431.2,968.5 L1432.7,968.0 L1434.2,967.5 L1435.7,967.1 L1437.2,967.0 L1438.7,967.3 L1440.2,968.1 L1441.7,969.1 L1443.2,970.4 L1444.7,972.1 L1446.2,975.2 L1447.7,979.5 L1449.2,984.4 L1450.7,989.1 L1452.2,993.2 L1453.7,996.6 L1455.2,1000.3 L1456.7,1003.9 L1458.2,1007.0 L1459.7,1009.3 L1461.2,1010.4 L1462.7,1009.8 L1464.2,1007.7 L1465.7,1004.2 L1467.2,999.8 L1468.7,994.6 L1470.2,989.1 L1471.7,983.5 L1473.2,976.7 L1474.7,967.4 L1476.2,958.4 L1477.7,952.8 L1479.2,949.5 L1480.7,946.5 L1482.2,944.0 L1483.7,942.0 L1485.2,940.5 L1486.7,939.8 L1488.2,939.9 L1489.7,941.0 L1491.2,942.9 L1492.7,945.4 L1494.2,948.3 L1495.7,951.4 L1497.2,954.4 L1498.7,957.5 L1500.2,960.8 L1501.7,964.5 L1503.2,968.6 L1504.7,972.8 L1506.2,977.4 L1507.7,982.2 L1509.2,987.2" fill="none" stroke="#0a7a60" stroke-width="3" stroke-linejoin="round"/>
    <line x1="682" y1="1203" x2="1500" y2="1203" stroke="#1c3a9a" stroke-width="3"/>
  </svg>
  <div class="t" style="left:753px;top:1222.7px;font-size:21px;color:#7b808b;font-weight:normal;letter-spacing:0px">Sep 20</div>
  <div class="t" style="left:881px;top:1222.7px;font-size:21px;color:#7b808b;font-weight:normal;letter-spacing:0px">Sep 26</div>
  <div class="t" style="left:1015px;top:1222.7px;font-size:21px;color:#7b808b;font-weight:normal;letter-spacing:0px">Oct 2</div>
  <div class="t" style="left:1121px;top:1222.7px;font-size:21px;color:#7b808b;font-weight:normal;letter-spacing:0px">Oct 7</div>
  <div class="t" style="left:1243px;top:1222.7px;font-size:21px;color:#7b808b;font-weight:normal;letter-spacing:0px">Oct 13</div>
  <div class="t" style="left:1370px;top:1222.7px;font-size:21px;color:#7b808b;font-weight:normal;letter-spacing:0px">Oct 19</div>
  <div class="t" style="left:1495px;top:1222.7px;font-size:21px;color:#7b808b;font-weight:normal;letter-spacing:0px">Oct 25</div>
  <div class="abs" style="left:1326px;top:1280px;width:14px;height:14px;border-radius:3px;background:#1d4ed8"></div>
  <div class="t" style="left:1350px;top:1277.1px;font-size:20px;color:#9a9ea8;font-weight:normal;letter-spacing:0px">PPPoE</div>
  <div class="abs" style="left:1438px;top:1280px;width:14px;height:14px;border-radius:3px;background:#10b981"></div>
  <div class="t" style="left:1462px;top:1277.1px;font-size:20px;color:#9a9ea8;font-weight:normal;letter-spacing:0px">Hotspot</div>

  <!-- registrations card -->
  <div class="card" style="left:632px;top:1390px;width:780px;height:300px;border-radius:18px"></div>
  <div class="t" style="left:673px;top:1433.0px;font-size:26px;color:#e3e5ea;font-weight:bold;-webkit-text-stroke:0;letter-spacing:0.3px">Registrations</div>
  <div class="t" style="left:673px;top:1464.5px;font-size:23px;color:#7a808e;font-weight:normal;letter-spacing:0.9px">Registrations for the last 6 months</div>
  <div class="abs" style="left:1103px;top:1433px;width:268px;height:59px;border-radius:14px;border:2px solid #222b3c;background:#111a2c"></div>
  <div class="t" style="left:1125px;top:1448.7px;font-size:24px;color:#bfc2c9;font-weight:normal;letter-spacing:0.5px">Last 30 days</div>
  <svg class="ico" style="left:1325px;top:1454px" width="20" height="14" viewBox="0 0 20 14"><polyline points="3,3 10,10 17,3" fill="none" stroke="#6d7383" stroke-width="2.2"/></svg>
  <div class="card" style="left:1452px;top:1390px;width:300px;height:300px;border-radius:18px"></div>
  <div class="t" style="left:1494px;top:1433.0px;font-size:26px;color:#e3e5ea;font-weight:bold;-webkit-text-stroke:0;letter-spacing:0px">D</div>
  <div class="t" style="left:1494px;top:1471px;font-size:23px;color:#7a808e">D</div>
</div>
<div id="tb">
    <svg class="ico" style="left:120px;top:22px" width="26" height="36" viewBox="0 0 26 36"><polyline points="21.5,3 3.5,18 21.5,33" fill="none" stroke="#9a9ea8" stroke-width="3.8" stroke-linejoin="miter"/></svg>
    <svg class="ico" style="left:345px;top:22px" width="26" height="36" viewBox="0 0 26 36"><polyline points="3.5,3 21.5,18 3.5,33" fill="none" stroke="#9a9ea8" stroke-width="3.8"/></svg>
    <svg class="ico" style="left:564px;top:20px" width="46" height="40" viewBox="0 0 46 40"><path d="M4,7 Q13,1 23,6 Q33,1 42,7 L42,35 Q33,31 23,36 Q13,31 4,35 Z M23,6 L23,36" fill="none" stroke="#a6a9b2" stroke-width="3.2" stroke-linejoin="round"/></svg>
    <div id="url">
      <svg class="ico" style="left:14px;top:15px" width="38" height="36" viewBox="0 0 38 36"><polygon points="0,21 34,21 17,39" fill="#4b4b4b"/><text x="0" y="20.5" font-family="Liberation Sans" font-size="22" fill="#d4d6dc" stroke="#d4d6dc" stroke-width="0.6">A</text><text x="15" y="20.5" font-family="Liberation Sans" font-size="26" fill="#d4d6dc" stroke="#d4d6dc" stroke-width="0.6">A</text></svg>
      <svg class="ico" style="left:305px;top:13px" width="230" height="45" viewBox="0 0 230 45"><polygon points="1,23 21,23 11,33" fill="#4b4b4b"/><polygon points="29,23 139,23 130,41 42,41" fill="#4b4b4b"/><path d="M5,14 V9.5 A6,6 0 0 1 17,9.5 V14" fill="none" stroke="#e6e7ea" stroke-width="3"/><rect x="2" y="13" width="17" height="12" rx="2.5" fill="#e6e7ea"/></svg>
      <div class="t" style="left:332px;top:15px;font-size:25px;color:#cfd1d7;letter-spacing:1.2px">localhost</div>
    </div>
  </div>
</div>
</body></html>
